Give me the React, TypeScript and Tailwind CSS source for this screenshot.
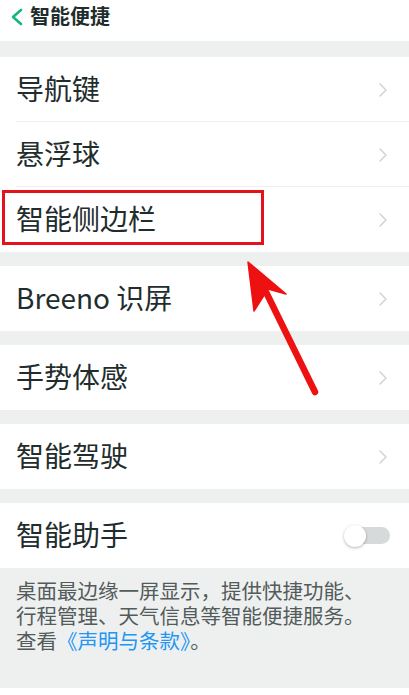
import { ReactNode } from 'react'

const cjk = { fontFamily: '"Noto Sans CJK SC", "Noto Sans", sans-serif' }

function Chevron() {
  return (
    <svg width="10" height="16" viewBox="0 0 10 16" className="shrink-0">
      <path d="M2 2 L8 8 L2 14" fill="none" stroke="#d3d5d5" strokeWidth="1.6" strokeLinecap="round" strokeLinejoin="round" />
    </svg>
  )
}

function Row({ label, divider, children }: { label: ReactNode; divider?: boolean; children?: ReactNode }) {
  return (
    <div className="relative bg-white h-[65px] flex items-center pl-4 pr-[21px]">
      <span className="flex-1 text-[28px] leading-none text-[#1f2d2d] -mt-[3px]">{label}</span>
      {children ?? <Chevron />}
      {divider && <div className="absolute bottom-0 left-4 right-0 h-px bg-[#efefef]" />}
    </div>
  )
}

function Gap({ h }: { h: string }) {
  return <div className={`${h} bg-[#eef0f0]`} />
}

export default function App() {
  return (
    <div className="relative w-[409px] h-[695px] bg-white overflow-hidden" style={cjk}>
      {/* Header */}
      <div className="h-[41px] flex items-center pl-[10px] gap-[6px]">
        <svg width="14" height="18" viewBox="0 0 14 18" className="-mt-[8px]">
          <path d="M11 2 L3 9 L11 16" fill="none" stroke="#17b57c" strokeWidth="2.6" strokeLinecap="round" strokeLinejoin="round" />
        </svg>
        <span className="text-[20px] font-bold text-[#1f2d2d] leading-none -mt-[10px]">智能便捷</span>
      </div>
      <Gap h="h-4" />

      <Row label="导航键" divider />
      <Row label="悬浮球" divider />
      <div className="relative">
        <Row label="智能侧边栏" />
        <div className="absolute top-[3px] left-[2px] w-[262px] h-[55px] border-[3px] border-[#e3121c]" />
      </div>
      <Gap h="h-[14px]" />
      <Row label={<span>Breeno <span>识屏</span></span>} />
      <Gap h="h-[14px]" />
      <Row label="手势体感" />
      <Gap h="h-[14px]" />
      <Row label="智能驾驶" />
      <Gap h="h-[14px]" />
      <Row label="智能助手">
        <div className="relative w-[46px] h-[24px] flex items-center mr-[-2px]">
          <div className="absolute right-0 w-[38px] h-[17px] rounded-full bg-[#d7dada]" />
          <div className="absolute left-0 w-[22px] h-[22px] rounded-full bg-white shadow-[0_1px_3px_rgba(0,0,0,0.3)]" />
        </div>
      </Row>

      {/* Description */}
      <div className="bg-[#eef0f0] h-[120px] pt-[10px] px-4 text-[20.5px] leading-[25px] text-[#535b5b]">
        <p className="whitespace-nowrap">桌面最边缘一屏显示，提供快捷功能、</p>
        <p className="whitespace-nowrap">行程管理、天气信息等智能便捷服务。</p>
        <p className="whitespace-nowrap">
          查看<span className="text-[#2196f3]">《声明与条款》</span>。
        </p>
      </div>

      {/* Red annotation arrow */}
      <svg className="absolute left-0 top-0 pointer-events-none" width="409" height="695" viewBox="0 0 409 695">
        <line x1="266" y1="292" x2="315" y2="392" stroke="#ee1111" strokeWidth="6.5" strokeLinecap="round" />
        <path d="M248 262 L286 294 L268 289 L254 311 Z" fill="#ee1111" stroke="#ee1111" strokeWidth="1.5" strokeLinejoin="round" />
      </svg>
    </div>
  )
}
